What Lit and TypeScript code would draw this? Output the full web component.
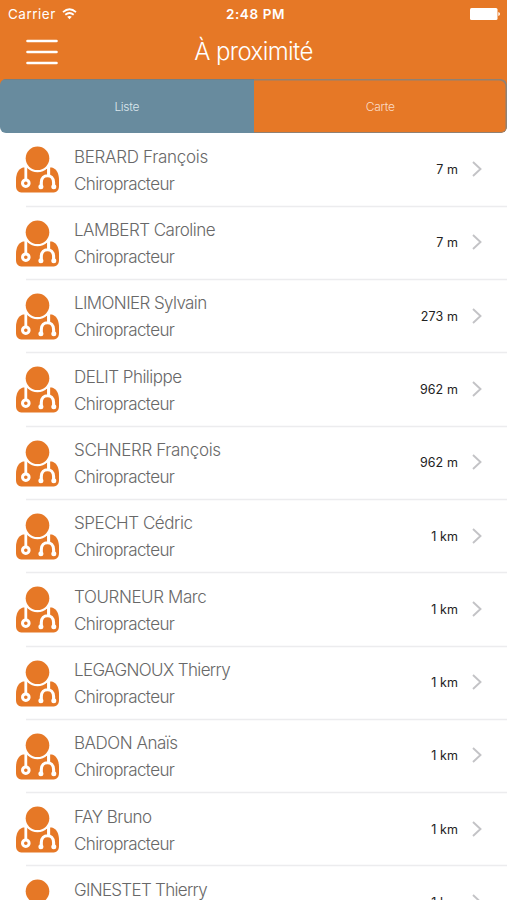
import { LitElement, html, css, svg } from "lit";
import { customElement, property } from "lit/decorators.js";

interface Practitioner {
  name: string;
  distance: string;
  spacing: number;
}

const PRACTITIONERS: Practitioner[] = [
  { name: "BERARD François", distance: "7 m", spacing: -0.3 },
  { name: "LAMBERT Caroline", distance: "7 m", spacing: -0.52 },
  { name: "LIMONIER Sylvain", distance: "273 m", spacing: -0.6 },
  { name: "DELIT Philippe", distance: "962 m", spacing: -0.53 },
  { name: "SCHNERR François", distance: "962 m", spacing: -0.35 },
  { name: "SPECHT Cédric", distance: "1 km", spacing: -0.45 },
  { name: "TOURNEUR Marc", distance: "1 km", spacing: -0.4 },
  { name: "LEGAGNOUX Thierry", distance: "1 km", spacing: -0.62 },
  { name: "BADON Anaïs", distance: "1 km", spacing: -0.48 },
  { name: "FAY Bruno", distance: "1 km", spacing: -0.5 },
  { name: "GINESTET Thierry", distance: "1 km", spacing: -0.7 },
];

const doctorIcon = svg`
  <path d="M7 21.500H36C40.800 23 43 28 43 34V40C43 44.500 40.500 46.600 36 46.600H7C2.500 46.600 0 44.500 0 40V34C0 28 2.200 23 7 21.500Z" fill="#e67826"/>
  <circle cx="21.500" cy="12.300" r="14" fill="#fff"/>
  <circle cx="21.500" cy="12.300" r="11.800" fill="#e67826"/>
  <g fill="none" stroke="#fff" stroke-width="2.800">
    <path d="M9.800 19V33"/>
    <circle cx="9.800" cy="37.200" r="3.300" stroke-width="3"/>
    <path d="M32.600 19V30M25.300 41V36.500C25.300 27.500 37.600 27.500 37.600 36.500V41" stroke-width="3.100"/>
  </g>
  <circle cx="24.900" cy="40.800" r="2.500" fill="#fff"/>
  <circle cx="37.800" cy="40.800" r="2.500" fill="#fff"/>
`;

@customElement("practitioner-row")
export class PractitionerRow extends LitElement {
  @property({ attribute: false }) item!: Practitioner;

  static styles = css`
    :host { display: flex; height: 73.3px; flex: none; position: relative; box-sizing: border-box; padding: 13.7px 24px 0 16px; align-items: flex-start; }
    .rule { position: absolute; left: 26px; right: 0; bottom: -2px; width: 481px; height: 3px; }
    .doctor { width: 43px; height: 47px; flex: none; margin-top: 0.3px; }
    .text { margin-left: 15px; flex: 1; font: 300 17px/27px Inter, "Liberation Sans", sans-serif; color: #686868; margin-top: -2.3px; white-space: nowrap; }
    .role { letter-spacing: -0.62px; }
    .distance { font: 400 12.500px/20px Inter, "Liberation Sans", sans-serif; color: #222; margin-top: 13.900px; letter-spacing: 0.1px; }
    .chevron { width: 12px; height: 18px; margin: 13.900px 0 0 13px; flex: none; }
  `;

  render() {
    return html`
      <svg class="doctor" viewBox="0 0 43 47">${doctorIcon}</svg>
      <div class="text">
        <div><span style="letter-spacing:${this.item.spacing}px">${this.item.name}</span></div>
        <div class="role">Chiropracteur</div>
      </div>
      <span class="distance">${this.item.distance}</span>
      <svg class="chevron" viewBox="0 0 12 18" fill="none" stroke="#c3c3c6" stroke-width="1.900"><path d="M2 2L9.500 9L2 16"/></svg>
      <svg class="rule" viewBox="0 0 481 3"><path d="M0 1.500H481" stroke="#ececee" stroke-width="1.400"/></svg>
    `;
  }
}

@customElement("app-root")
export class AppRoot extends LitElement {
  static styles = css`
    :host { display: flex; flex-direction: column; width: 507px; height: 900px; overflow: hidden; background: #fff; font-family: Inter, "Liberation Sans", sans-serif; }
    .top { background: #e67826; color: #fff; height: 79px; flex: none; }
    .status { display: grid; grid-template-columns: 1fr auto 1fr; height: 27px; align-items: center; padding: 0 7px 0 8px; font-size: 13.500px; }
    .carrier { display: flex; align-items: center; gap: 6px; letter-spacing: 0.5px; }
    .time { font-weight: 600; letter-spacing: 0.6px; padding-left: 3px; }
    .battery { justify-self: end; }
    .nav { display: grid; grid-template-columns: 1fr auto 1fr; height: 50px; align-items: center; }
    .menu { margin-left: 26px; }
    .title { margin: -2px 0 0; font-weight: 300; font-size: 24px; letter-spacing: -0.6px; }
    .tabs { display: flex; height: 53.500px; border-radius: 6px; overflow: hidden; }
    .corner { flex: none; background: linear-gradient(#e67826 50%, #fff 50%); }
    .tab { flex: 1; box-sizing: border-box; display: flex; align-items: center; justify-content: center; background: #e67826; color: #fbdcc6; font-weight: 300; font-size: 12px; letter-spacing: -0.3px; padding-top: 1px; box-shadow: inset -1.500px 1.500px #8f8174, inset 0 -1px #8f8174; }
    .tab:last-child { border-radius: 0 6px 6px 0; }
    .selected { background: #688b9e; color: #dbe7ed; box-shadow: inset 0 1px #747f83; }
    .list { flex: 1; overflow: hidden; display: flex; flex-direction: column; }
  `;

  render() {
    return html`
      <header class="top">
        <div class="status">
          <span class="carrier">Carrier
            <svg width="15" height="12" viewBox="0 0 15 12" fill="none" stroke="#fff" stroke-width="1.800"><path d="M1 4.200Q7.500 -1.600 14 4.200M3.300 6.800Q7.500 3.200 11.700 6.800"/><path d="M5.200 8.800Q7.500 7 9.800 8.800L7.500 11.200Z" fill="#fff" stroke="none"/></svg>
          </span>
          <span class="time">2:48 PM</span>
          <svg class="battery" width="30" height="12" viewBox="0 0 30 12" fill="#fff"><rect width="27.500" height="12" rx="1.500"/><path d="M28.300 4Q30 4.500 30 6T28.300 8Z"/></svg>
        </div>
        <div class="nav">
          <svg class="menu" width="32" height="26" viewBox="0 0 32 26" stroke="#fff" stroke-width="2.600" stroke-linecap="round"><path d="M1.500 2H30.500M1.500 13H30.500M1.500 24H30.500"/></svg>
          <h1 class="title">À proximité</h1><span></span>
        </div>
      </header>
      <div class="corner"><nav class="tabs"><div class="tab selected">Liste</div><div class="tab">Carte</div></nav></div>
      <main class="list">${PRACTITIONERS.map((p) => html`<practitioner-row .item=${p}></practitioner-row>`)}</main>
    `;
  }
}
